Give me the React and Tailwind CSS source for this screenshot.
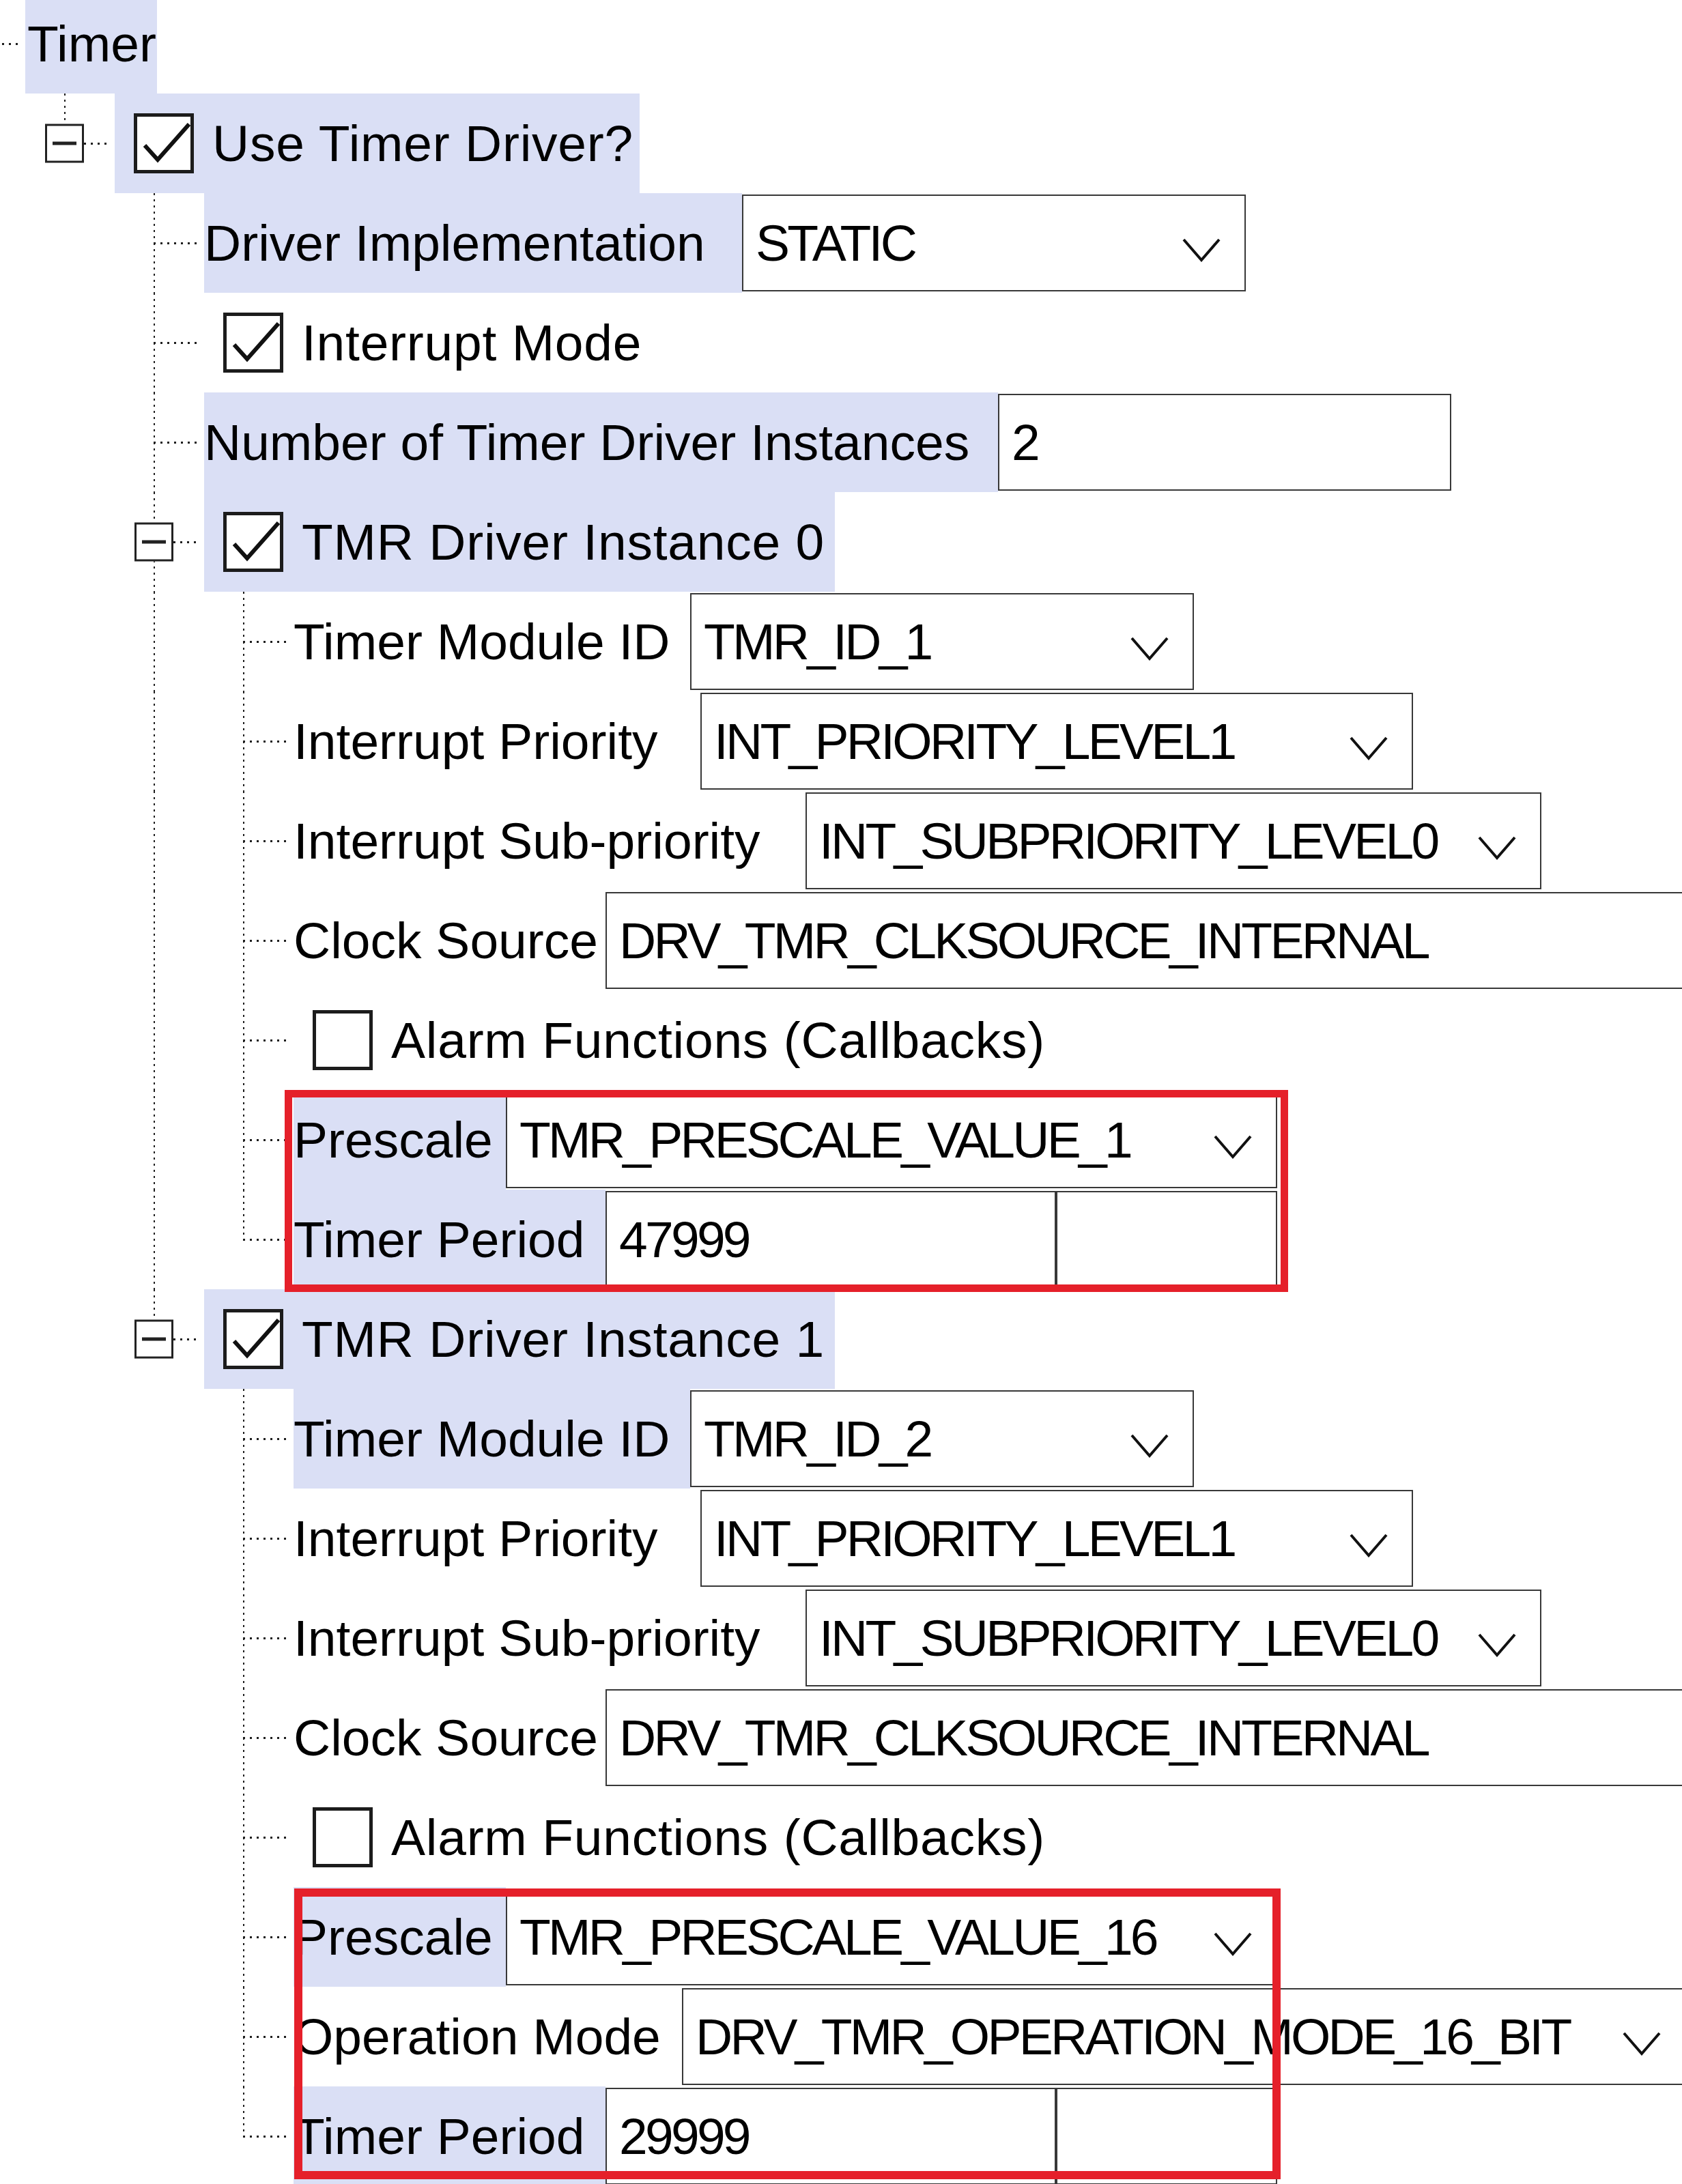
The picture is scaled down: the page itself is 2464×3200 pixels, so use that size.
const vDots =
    'bg-[image:repeating-linear-gradient(to_bottom,#1e1e1e_0px,#1e1e1e_3px,transparent_3px,transparent_9px)]';
const hDots =
    'bg-[image:repeating-linear-gradient(to_right,#1e1e1e_0px,#1e1e1e_3px,transparent_3px,transparent_10px)]';
const HL = 'bg-[#dadff5]';

const instance = (n, guide) => [
    {
        level: 3,
        guides: [false, false, guide],
        type: 'field',
        label: 'Timer Module ID',
        hl: n === 1,
        lw: 581,
        fields: [{ value: `TMR_ID_${n + 1}`, w: 738, drop: true }],
    },
    {
        level: 3,
        guides: [false, false, guide],
        type: 'field',
        label: 'Interrupt Priority',
        lw: 596,
        fields: [{ value: 'INT_PRIORITY_LEVEL1', w: 1044, drop: true }],
    },
    {
        level: 3,
        guides: [false, false, guide],
        type: 'field',
        label: 'Interrupt Sub-priority',
        lw: 750,
        fields: [{ value: 'INT_SUBPRIORITY_LEVEL0', w: 1078, drop: true }],
    },
    {
        level: 3,
        guides: [false, false, guide],
        type: 'field',
        label: 'Clock Source',
        lw: 457,
        fields: [{ value: 'DRV_TMR_CLKSOURCE_INTERNAL', w: 1640 }],
    },
    {
        level: 3,
        guides: [false, false, guide],
        type: 'check',
        checked: false,
        text: 'Alarm Functions (Callbacks)',
    },
    {
        level: 3,
        guides: [false, false, guide],
        type: 'field',
        label: 'Prescale',
        hl: true,
        lw: 311,
        fields: [
            {
                value: n === 0 ? 'TMR_PRESCALE_VALUE_1' : 'TMR_PRESCALE_VALUE_16',
                w: 1130,
                drop: true,
            },
        ],
    },
    ...(n === 1
        ? [
              {
                  level: 3,
                  guides: [false, false, guide],
                  type: 'field',
                  label: 'Operation Mode',
                  lw: 569,
                  fields: [
                      {
                          value: 'DRV_TMR_OPERATION_MODE_16_BIT',
                          w: 1471,
                          drop: true,
                      },
                  ],
              },
          ]
        : []),
    {
        level: 3,
        guides: [false, false, guide],
        last: true,
        type: 'field',
        label: 'Timer Period',
        hl: true,
        lw: 457,
        fields: [
            { value: n === 0 ? '47999' : '29999', w: 660 },
            { value: '', w: 324 },
        ],
    },
];

const TREE = [
    { level: 0, guides: [], last: true, type: 'label', text: 'Timer', hl: true, w: 193 },
    {
        level: 1,
        guides: [false],
        last: true,
        exp: true,
        type: 'check',
        checked: true,
        text: 'Use Timer Driver?',
        hl: true,
        w: 769,
    },
    {
        level: 2,
        guides: [false, false],
        type: 'field',
        label: 'Driver Implementation',
        hl: true,
        lw: 788,
        fields: [{ value: 'STATIC', w: 738, drop: true }],
    },
    { level: 2, guides: [false, false], type: 'check', checked: true, text: 'Interrupt Mode' },
    {
        level: 2,
        guides: [false, false],
        type: 'field',
        label: 'Number of Timer Driver Instances',
        hl: true,
        lw: 1163,
        fields: [{ value: '2', w: 664 }],
    },
    {
        level: 2,
        guides: [false, false],
        exp: true,
        type: 'check',
        checked: true,
        text: 'TMR Driver Instance 0',
        hl: true,
        w: 924,
    },
    ...instance(0, true),
    {
        level: 2,
        guides: [false, false],
        last: true,
        exp: true,
        type: 'check',
        checked: true,
        text: 'TMR Driver Instance 1',
        hl: true,
        w: 924,
    },
    ...instance(1, false),
];

const Chevron = () => (
    <svg width="58" height="36" viewBox="0 0 58 36" className="shrink-0">
        <polyline points="3,3 29,33 55,3" fill="none" stroke="#111" strokeWidth="4" />
    </svg>
);

const Checkbox = ({ checked }) => (
    <div className="w-[88px] h-[88px] shrink-0 border-[5px] border-[#1c1c1c] bg-white">
        {checked && (
            <svg width="78" height="78" viewBox="0 0 78 78">
                <polyline
                    points="11,42 30,63 76,11"
                    fill="none"
                    stroke="#111"
                    strokeWidth="6"
                />
            </svg>
        )}
    </div>
);

const Connector = ({ last, exp }) => (
    <div className="relative w-[74px] h-full shrink-0">
        <div className={`absolute left-0 top-0 h-1/2 w-[2px] ${vDots}`} />
        {!last && <div className={`absolute left-0 top-1/2 h-1/2 w-[2px] ${vDots}`} />}
        <div
            className={`absolute top-1/2 -mt-[1px] h-[3px] ${hDots} ${
                exp ? 'left-[29px] w-[38px]' : 'left-0 w-[68px]'
            }`}
        />
        {exp && (
            <div className="absolute left-[-28px] top-1/2 -translate-y-1/2 w-[57px] h-[57px] border-[3px] border-[#222] bg-white flex items-center justify-center">
                <div className="w-[35px] h-[5px] bg-[#222]" />
            </div>
        )}
    </div>
);

const Field = ({ value, w, drop }) => (
    <div
        className="h-[142px] shrink-0 border-2 border-[#383838] bg-white flex items-center pl-[18px] overflow-hidden"
        style={{ width: w }}
    >
        <span className="whitespace-nowrap tracking-[-0.05em]">{value}</span>
        {drop && (
            <div className="ml-auto mr-[34px] mt-[20px]">
                <Chevron />
            </div>
        )}
    </div>
);

const Row = ({ row }) => (
    <div className="flex items-center h-[146px] shrink-0">
        {row.guides.map((on, i) => (
            <div key={i} className="w-[131px] h-full shrink-0">
                {on && <div className={`w-[2px] h-full ${vDots}`} />}
            </div>
        ))}
        <Connector last={row.last} exp={row.exp} />
        {row.type === 'label' && (
            <div
                className={`h-full shrink-0 flex items-center pl-[3px] whitespace-nowrap ${row.hl ? HL : ''}`}
                style={{ width: row.w }}
            >
                {row.text}
            </div>
        )}
        {row.type === 'check' && (
            <div
                className={`h-full shrink-0 flex items-center pl-[28px] whitespace-nowrap ${row.hl ? HL : ''}`}
                style={row.w ? { width: row.w } : undefined}
            >
                <Checkbox checked={row.checked} />
                <span className="ml-[27px] tracking-[0.01em]">{row.text}</span>
            </div>
        )}
        {row.type === 'field' && (
            <>
                <div
                    className={`h-full shrink-0 flex items-center whitespace-nowrap ${row.hl ? HL : ''}`}
                    style={{ width: row.lw }}
                >
                    {row.label}
                </div>
                {row.fields.map((f, i) => (
                    <Field key={i} {...f} />
                ))}
            </>
        )}
    </div>
);

export default function App() {
    return (
        <div className="relative w-[2464px] h-[3200px] overflow-hidden bg-white text-black font-['Liberation_Sans',Arial,sans-serif] text-[75px] leading-[1.15]">
            <div className="flex flex-col -ml-[37px] -mt-[9px]">
                {TREE.map((row, i) => (
                    <Row key={i} row={row} />
                ))}
            </div>
            {/* annotation frames */}
            <div className="absolute left-[417px] top-[1597px] w-[1470px] h-[296px] border-[11px] border-[#e5202a]" />
            <div className="absolute left-[431px] top-[2767px] w-[1445px] h-[426px] border-[12px] border-[#e5202a]" />
        </div>
    );
}
